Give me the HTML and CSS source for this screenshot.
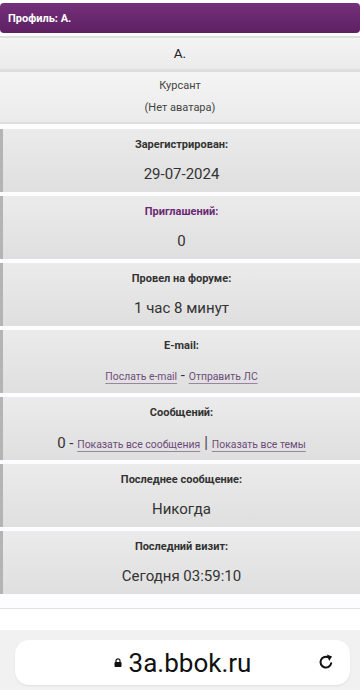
FILE: index.html
```html
<!DOCTYPE html>
<html>
<head>
    <meta charset="utf-8">
    <title>Профиль: A.</title>
    <link rel="stylesheet" href="styles.css">
</head>
<body>
    <div class="page">
        <div class="titlebar">Профиль: A.</div>

        <div class="profile">
            <div class="head-row name">A.</div>
            <div class="head-row rank">
                <div>Курсант</div>
                <div>(Нет аватара)</div>
            </div>

            <div class="field">
                <div class="label">Зарегистрирован:</div>
                <div class="value">29-07-2024</div>
            </div>
            <div class="field">
                <div class="label label-accent">Приглашений:</div>
                <div class="value">0</div>
            </div>
            <div class="field">
                <div class="label">Провел на форуме:</div>
                <div class="value">1 час 8 минут</div>
            </div>
            <div class="field">
                <div class="label">E-mail:</div>
                <div class="value"><a href="#">Послать e-mail</a> - <a href="#">Отправить ЛС</a></div>
            </div>
            <div class="field">
                <div class="label">Сообщений:</div>
                <div class="value">0 - <a href="#">Показать все сообщения</a> <span class="sep">|</span> <a href="#">Показать все темы</a></div>
            </div>
            <div class="field">
                <div class="label">Последнее сообщение:</div>
                <div class="value">Никогда</div>
            </div>
            <div class="field">
                <div class="label">Последний визит:</div>
                <div class="value">Сегодня 03:59:10</div>
            </div>
        </div>
    </div>

    <div class="browserbar">
        <div class="urlbox">
            <span class="url">
                <svg class="lock" width="8" height="9" viewBox="0 0 8 9"><path d="M2 4V2.8a2 2 0 0 1 4 0V4" fill="none" stroke="#111" stroke-width="1.2"/><rect x="0.5" y="4" width="7" height="5" rx="1" fill="#111"/></svg>
                3a.bbok.ru
            </span>
            <svg class="reload" width="18" height="18" viewBox="0 0 16 16"><path d="M12.6 9.2A4.8 4.8 0 1 1 10.4 4" fill="none" stroke="#111" stroke-width="1.8" stroke-linecap="round"/><path d="M8.8 1.4l4.6 1.7-2.6 3.9z" fill="#111"/></svg>
        </div>
    </div>
</body>
</html>
```

FILE: styles.css
```css
body {
    margin: 0;
    background: #fff;
    font-family: Roboto, "Noto Sans", sans-serif;
    color: #333;
}

.page {
    height: 630px;
    padding-top: 3px;
    box-sizing: border-box;
}

.titlebar {
    height: 30px;
    padding: 0 8px;
    display: flex;
    align-items: center;
    background: linear-gradient(#75307b, #5d2062);
    border-radius: 4px;
    color: #fff;
    font-size: 11px;
    font-weight: bold;
}

.profile {
    margin-top: 3px;
    padding-bottom: 14px;
    border-bottom: 1px solid #e2e0e6;
    background: #fdfcfe;
}

.head-row {
    text-align: center;
    background: linear-gradient(#f4f4f4, #ebebeb);
    border-top: 2px solid #dedede;
}

.name {
    height: 31px;
    line-height: 31px;
    font-size: 13.5px;
    color: #222;
}

.rank {
    height: 55px;
    box-sizing: border-box;
    padding-top: 3px;
    border-top-width: 3px;
    border-bottom: 2px solid #dedede;
    font-size: 11px;
    line-height: 22px;
    color: #444;
}

.field {
    height: 63px;
    box-sizing: border-box;
    margin-top: 4px;
    padding-top: 9px;
    border-left: 3px solid #b4b4b4;
    background: linear-gradient(#ebebeb, #dfdfdf);
    text-align: center;
}

.rank + .field {
    margin-top: 5px;
}

.label {
    font-size: 11px;
    font-weight: bold;
    line-height: 14px;
    color: #333;
}

.label-accent {
    color: #6a2a72;
}

.value {
    margin-top: 12px;
    font-size: 15px;
    line-height: 20px;
    color: #333;
}

.value a {
    font-size: 10.4px;
    color: #6d4c78;
    text-decoration: underline;
    text-decoration-color: #9a83a3;
    text-underline-offset: 3px;
}

.sep {
    font-size: 17px;
    color: #555;
}

.browserbar {
    height: 60px;
    box-sizing: border-box;
    padding: 10px 10px 0 15px;
    background: #f1f1f1;
}

.urlbox {
    position: relative;
    height: 45px;
    background: #fff;
    border-radius: 14px;
    box-shadow: 0 1px 2px rgba(0,0,0,0.08);
    display: flex;
    align-items: center;
    justify-content: center;
}

.url {
    display: flex;
    align-items: center;
    gap: 7px;
    font-family: Roboto, sans-serif;
    font-size: 26px;
    color: #111;
}

.reload {
    position: absolute;
    right: 15px;
    top: 13px;
}
```
